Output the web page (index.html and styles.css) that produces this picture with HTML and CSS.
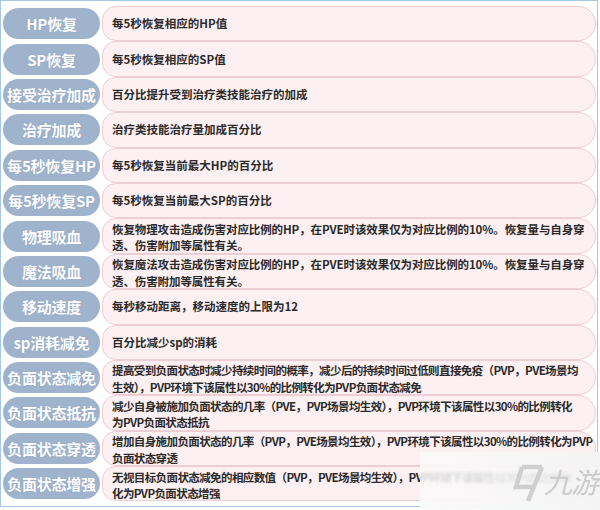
FILE: index.html
```html
<!DOCTYPE html>
<html lang="zh-CN">
<head>
<meta charset="utf-8">
<title>属性说明</title>
<link rel="stylesheet" href="styles.css">
</head>
<body>
<div class="frame">
  <div class="table">
    <div class="row"><div class="label">HP恢复</div><div class="desc">每5秒恢复相应的HP值</div></div>
    <div class="row"><div class="label">SP恢复</div><div class="desc">每5秒恢复相应的SP值</div></div>
    <div class="row"><div class="label">接受治疗加成</div><div class="desc">百分比提升受到治疗类技能治疗的加成</div></div>
    <div class="row"><div class="label">治疗加成</div><div class="desc">治疗类技能治疗量加成百分比</div></div>
    <div class="row"><div class="label">每5秒恢复HP</div><div class="desc">每5秒恢复当前最大HP的百分比</div></div>
    <div class="row"><div class="label">每5秒恢复SP</div><div class="desc">每5秒恢复当前最大SP的百分比</div></div>
    <div class="row"><div class="label">物理吸血</div><div class="desc two">恢复物理攻击造成伤害对应比例的HP，在PVE时该效果仅为对应比例的10%。恢复量与自身穿<br>透、伤害附加等属性有关。</div></div>
    <div class="row"><div class="label">魔法吸血</div><div class="desc two">恢复魔法攻击造成伤害对应比例的HP，在PVE时该效果仅为对应比例的10%。恢复量与自身穿<br>透、伤害附加等属性有关。</div></div>
    <div class="row"><div class="label">移动速度</div><div class="desc">每秒移动距离，移动速度的上限为12</div></div>
    <div class="row"><div class="label">sp消耗减免</div><div class="desc">百分比减少sp的消耗</div></div>
    <div class="row"><div class="label">负面状态减免</div><div class="desc two tight">提高受到负面状态时减少持续时间的概率，减少后的持续时间过低则直接免疫（PVP，PVE场景均<br>生效），PVP环境下该属性以30%的比例转化为PVP负面状态减免</div></div>
    <div class="row"><div class="label">负面状态抵抗</div><div class="desc two tight">减少自身被施加负面状态的几率（PVE，PVP场景均生效），PVP环境下该属性以30%的比例转化<br>为PVP负面状态抵抗</div></div>
    <div class="row"><div class="label">负面状态穿透</div><div class="desc two tight">增加自身施加负面状态的几率（PVP，PVE场景均生效），PVP环境下该属性以30%的比例转化为PVP<br>负面状态穿透</div></div>
    <div class="row"><div class="label">负面状态增强</div><div class="desc two tight">无视目标负面状态减免的相应数值（PVP，PVE场景均生效），PVP环境下该属性以30%的比例转<br>化为PVP负面状态增强</div></div>
  </div>
</div>
<div class="watermark">
  <svg class="wm-logo" width="40" height="44" viewBox="0 0 40 44">
    <path d="M14 6 L34 6 M14 6 L8 26 L26 26 M34 6 L20 40" fill="none" stroke="#cfcfcf" stroke-width="4.5" stroke-linejoin="miter" stroke-linecap="butt"/>
  </svg>
  <span class="wm-text">九游</span>
</div>
</body>
</html>
```
FILE: styles.css
```css
html, body {
  margin: 0;
  padding: 0;
}
body {
  width: 600px;
  height: 510px;
  overflow: hidden;
  background: #fff;
  font-family: "Noto Sans CJK SC", "Noto Sans", sans-serif;
  position: relative;
}
.frame {
  box-sizing: border-box;
  width: 598px;
  height: 507px;
  border: 1.5px solid #a7c7e6;
  background: #fff;
  padding: 5px 1px 0 2px;
}
.table {
  display: grid;
  grid-template-rows: repeat(14, 35.4px);
}
.row {
  display: grid;
  grid-template-columns: 97px 1fr;
  column-gap: 2px;
  align-items: center;
}
.label {
  height: 31px;
  border-radius: 16px;
  background: #9fb3cd;
  color: #fff;
  font-weight: 700;
  font-size: 15px;
  display: flex;
  align-items: center;
  justify-content: center;
  white-space: nowrap;
  text-shadow: 0 0 1px #7f95b3;
  letter-spacing: -0.2px;
}
.desc {
  box-sizing: border-box;
  height: 35.4px;
  border: 1.5px solid #ecced3;
  border-radius: 14px 18px 18px 14px;
  background: #fdf0f2;
  color: #2a2a2a;
  font-size: 11.5px;
  font-weight: 700;
  line-height: 15px;
  padding: 0 4px 0 9px;
  display: flex;
  align-items: center;
  white-space: nowrap;
  overflow: hidden;
}
.desc.two {
  display: block;
  padding-top: 1.5px;
  line-height: 16.5px;
  letter-spacing: -0.1px;
}
.desc.tight {
  letter-spacing: -0.6px;
}
.watermark {
  position: absolute;
  left: 420px;
  top: 452px;
  width: 180px;
  height: 58px;
  background: linear-gradient(to right, rgba(250,250,250,0.82), rgba(244,244,244,0.95));
  backdrop-filter: blur(1.5px);
  display: flex;
  align-items: center;
  padding-left: 88px;
  box-sizing: border-box;
  gap: 0;
}
.wm-logo {
  flex: none;
  margin-top: 4px;
}
.wm-text {
  color: #cbcbcb;
  font-size: 28px;
  font-style: italic;
  font-weight: 400;
  margin-left: -4px;
  letter-spacing: -1px;
}
```
